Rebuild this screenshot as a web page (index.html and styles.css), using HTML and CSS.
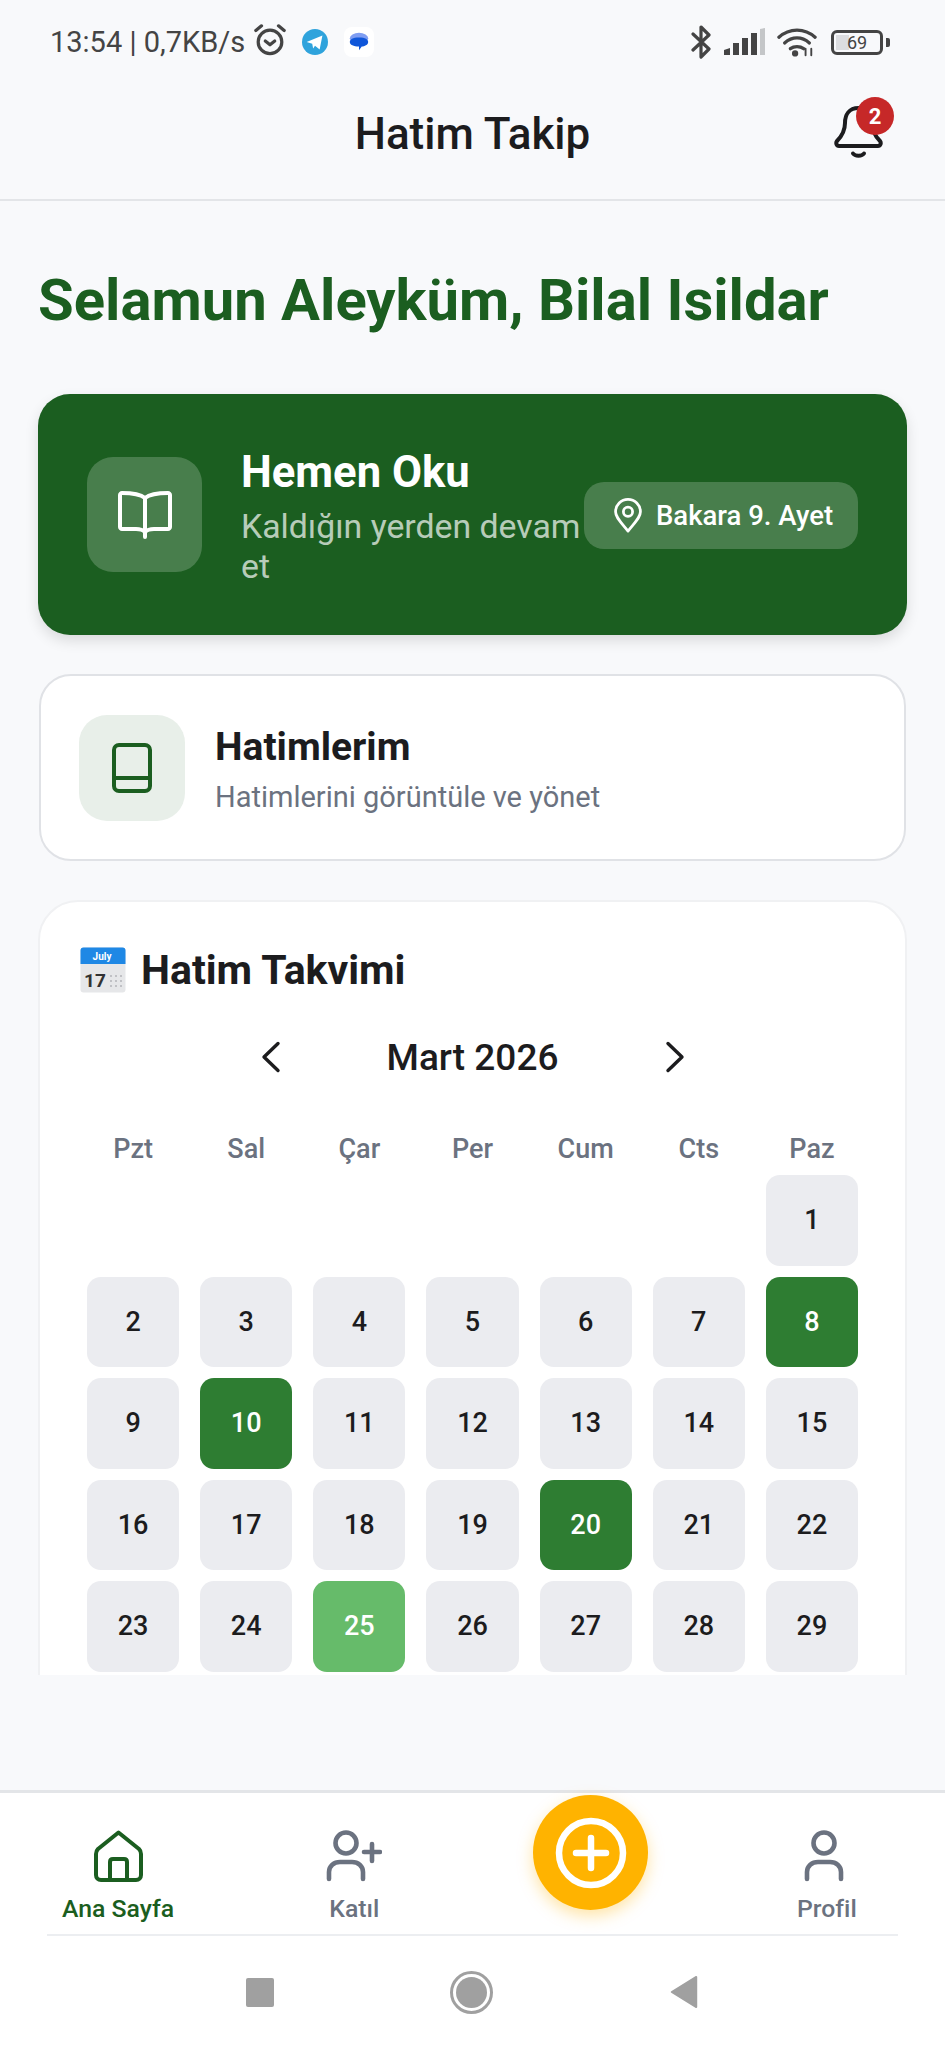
FILE: index.html
```html
<!DOCTYPE html>
<html lang="tr">
<head>
<meta charset="utf-8">
<title>Hatim Takip</title>
<link rel="stylesheet" href="styles.css">
</head>
<body>
<div class="app">
  <div class="statusbar">
    <div class="status-left">
      <span class="status-text">13:54 | 0,7KB/s</span>
      <svg class="ic-alarm" viewBox="0 0 36 36" fill="none" stroke="#444" stroke-width="3.4" stroke-linecap="round" stroke-linejoin="round"><circle cx="18" cy="20" r="12.5"/><path d="M13 19l5 4 5-4"/><path d="M3 8l6-5M33 8l-6-5"/></svg>
      <svg class="ic-tg" viewBox="0 0 28 28"><circle cx="14" cy="14" r="14" fill="#2fa3dc"/><path d="M5 14l17-7-3 15-5-4-2 3-1-5z" fill="#fff"/></svg>
      <span class="msg-box"><svg class="ic-msg" viewBox="0 0 24 24"><ellipse cx="12" cy="8" rx="10" ry="6" fill="#7f9df2"/><path d="M2 12c0-3 3-5 10-5s10 2 10 5-4 5-7 5l-3 4v-4c-6 0-10-2-10-5z" fill="#0f56d9"/></svg></span>
    </div>
    <div class="status-right">
      <svg class="ic-bt" viewBox="0 0 22 34" fill="none" stroke="#444" stroke-width="3.2" stroke-linecap="round" stroke-linejoin="round"><path d="M3 9l16 15-8 8V2l8 8L3 25"/></svg>
      <svg class="ic-sig" viewBox="0 0 42 28"><path d="M0 22l6-2v7H0z" fill="#444"/><rect x="9" y="15" width="6" height="12" fill="#444"/><rect x="18" y="10" width="6" height="17" fill="#444"/><rect x="27" y="5" width="6" height="22" fill="#444"/><path d="M36 1l5-1v27h-5z" fill="#c4c6c8"/></svg>
      <svg class="ic-wifi" viewBox="0 0 42 30" fill="none" stroke="#444" stroke-width="3.4" stroke-linecap="round"><path d="M2 10c11-10 27-10 38 0"/><path d="M8 16c8-7 18-7 26 0"/><path d="M14 22c4-3 10-3 14 0"/><circle cx="19" cy="27" r="1.6" fill="#444"/><path d="M30 22v7M36 22v7" stroke-width="2"/></svg>
      <div class="battery"><span class="batt-fill"></span><span class="batt-text">69</span></div>
    </div>
  </div>

  <header class="header">
    <h1 class="app-title">Hatim Takip</h1>
    <div class="bell">
      <svg viewBox="0 0 49 53" fill="none" stroke="#1c1c1e" stroke-width="4" stroke-linecap="round" stroke-linejoin="round"><path d="M24.500 3C15 3 11 10 11 18c0 8-3 13-8 18-1.500 2-.500 5 2 5h39c2.500 0 3.500-3 2-5-5-5-8-10-8-18 0-8-4-15-13.500-15z"/><path d="M19 48.500c2 3 9 3 11 0"/></svg>
      <span class="badge">2</span>
    </div>
  </header>

  <main class="main">
    <h2 class="greeting">Selamun Aleyküm, Bilal Isildar</h2>

    <section class="read-card">
      <div class="read-icon">
        <svg viewBox="0 0 54 48" fill="none" stroke="#fff" stroke-width="4" stroke-linejoin="round" stroke-linecap="round"><path d="M27 7C22 3 12 2 4 2c-1 0-2 1-2 2v32c0 1 1 2 2 2h14c4 0 7 1 9 3 2-2 5-3 9-3h14c1 0 2-1 2-2V4c0-1-1-2-2-2-8 0-18 1-23 5z"/><path d="M27 7v39"/></svg>
      </div>
      <div class="read-body">
        <div class="read-title">Hemen Oku</div>
        <div class="read-sub">Kaldığın yerden devam et</div>
      </div>
      <div class="read-pill">
        <svg viewBox="0 0 32 38" fill="none" stroke="#fff" stroke-width="3"><path d="M16 36C8 26 2.500 21 2.500 15a13.500 13.500 0 0 1 27 0c0 6-5.500 11-13.500 21z" stroke-linejoin="round"/><circle cx="16" cy="15" r="5"/></svg>
        <span>Bakara 9. Ayet</span>
      </div>
    </section>

    <section class="hatim-card">
      <div class="hatim-icon">
        <svg viewBox="0 0 40 50" fill="none" stroke="#1b5e20" stroke-width="4" stroke-linejoin="round"><rect x="2" y="2" width="36" height="46" rx="5"/><path d="M2 35h36"/></svg>
      </div>
      <div>
        <div class="hatim-title">Hatimlerim</div>
        <div class="hatim-sub">Hatimlerini görüntüle ve yönet</div>
      </div>
    </section>

    <section class="cal-card">
      <div class="cal-head">
        <svg class="ic-cal" viewBox="0 0 46 46"><rect x="0.500" y="0.500" width="45" height="45" rx="3" fill="#e6e7e9"/><path d="M0.500 17V3.500a3 3 0 0 1 3-3h39a3 3 0 0 1 3 3V17z" fill="#1f88e5"/><text x="22" y="12.500" font-size="10" font-weight="700" fill="#fff" text-anchor="middle" font-family="Roboto">July</text><text x="15" y="40" font-size="19" font-weight="700" fill="#333" text-anchor="middle" font-family="Roboto">17</text><g fill="#b3b5b8"><circle cx="31" cy="29" r="1"/><circle cx="36" cy="29" r="1"/><circle cx="41" cy="29" r="1"/><circle cx="31" cy="34" r="1"/><circle cx="36" cy="34" r="1"/><circle cx="41" cy="34" r="1"/><circle cx="31" cy="39" r="1"/><circle cx="36" cy="39" r="1"/><circle cx="41" cy="39" r="1"/></g></svg>
        <h3 class="cal-title">Hatim Takvimi</h3>
      </div>
      <div class="month-row">
        <svg class="chev" viewBox="0 0 20 32" fill="none" stroke="#1c1c1e" stroke-width="3.400" stroke-linecap="round" stroke-linejoin="round"><path d="M17 2.500L3 16l14 13.500"/></svg>
        <span class="month">Mart 2026</span>
        <svg class="chev" viewBox="0 0 20 32" fill="none" stroke="#1c1c1e" stroke-width="3.400" stroke-linecap="round" stroke-linejoin="round"><path d="M3 2.500L17 16 3 29.500"/></svg>
      </div>
      <div class="weekdays">
        <span>Pzt</span><span>Sal</span><span>Çar</span><span>Per</span><span>Cum</span><span>Cts</span><span>Paz</span>
      </div>
      <div class="days">
        <span class="blank"></span><span class="blank"></span><span class="blank"></span><span class="blank"></span><span class="blank"></span><span class="blank"></span>
        <span class="day">1</span>
        <span class="day">2</span><span class="day">3</span><span class="day">4</span><span class="day">5</span><span class="day">6</span><span class="day">7</span><span class="day done">8</span>
        <span class="day">9</span><span class="day done">10</span><span class="day">11</span><span class="day">12</span><span class="day">13</span><span class="day">14</span><span class="day">15</span>
        <span class="day">16</span><span class="day">17</span><span class="day">18</span><span class="day">19</span><span class="day done">20</span><span class="day">21</span><span class="day">22</span>
        <span class="day">23</span><span class="day">24</span><span class="day today">25</span><span class="day">26</span><span class="day">27</span><span class="day">28</span><span class="day">29</span>
      </div>
    </section>
  </main>

  <nav class="tabbar">
    <div class="tabs">
      <div class="tab active">
        <svg class="ic-home" viewBox="0 0 49 52" fill="none" stroke="#1b5e20" stroke-width="4" stroke-linejoin="round"><path d="M24.500 2.500L4 19c-1.500 1.500-2 3-2 5v21c0 3 2 5 5 5h35c3 0 5-2 5-5V24c0-2-.5-3.500-2-5z"/><path d="M16 50V32c0-2 1-3 3-3h11c2 0 3 1 3 3v18"/></svg>
        <span>Ana Sayfa</span>
      </div>
      <div class="tab">
        <svg class="ic-join" viewBox="0 0 56 52" fill="none" stroke="#6b7280" stroke-width="4.600" stroke-linecap="round"><circle cx="20" cy="13" r="10.500"/><path d="M3 49v-7c0-6 5-10 11-10h12c6 0 11 4 11 10v7"/><path d="M38 22h16M46 14v17"/></svg>
        <span>Katıl</span>
      </div>
      <div class="tab fab-slot">
        <div class="fab">
          <svg viewBox="0 0 72 72" fill="none" stroke="#fff" stroke-width="6.500" stroke-linecap="round"><circle cx="36" cy="36" r="32"/><path d="M36 21v30M21 36h30"/></svg>
        </div>
      </div>
      <div class="tab">
        <svg class="ic-prof" viewBox="0 0 46 52" fill="none" stroke="#6b7280" stroke-width="4.600" stroke-linecap="round"><circle cx="20" cy="13" r="10.500"/><path d="M3 49v-7c0-6 5-10 11-10h12c6 0 11 4 11 10v7"/></svg>
        <span>Profil</span>
      </div>
    </div>
    <div class="tab-rule"></div>
    <div class="gesture">
      <span class="nav-square"></span>
      <span class="nav-circle"><span class="nav-dot"></span></span>
      <svg class="nav-back" viewBox="0 0 30 36"><path d="M28 2v32L2 18z" fill="#a0a0a0" stroke="#a0a0a0" stroke-width="2" stroke-linejoin="round"/></svg>
    </div>
  </nav>
</div>
</body>
</html>
```
FILE: styles.css
```css
* { box-sizing: border-box; }
html, body { margin: 0; padding: 0; }
body { font-family: Roboto, "Liberation Sans", sans-serif; color: #1c1c1e; background: #f8f9fb; }
h1, h2, h3 { margin: 0; }

.app { width: 945px; height: 2048px; display: flex; flex-direction: column; background: #f8f9fb; overflow: hidden; }

/* status bar */
.statusbar { height: 72px; flex: none; display: flex; justify-content: space-between; align-items: center; padding: 12px 62px 0 50px; }
.status-left, .status-right { display: flex; align-items: center; }
.status-text { font-size: 29px; color: #444; }
.ic-alarm { width: 34px; height: 34px; margin-left: 8px; margin-top: -4px; }
.ic-tg { width: 26px; height: 26px; margin-left: 15px; }
.msg-box { width: 30px; height: 30px; margin-left: 16px; background: #fff; border-radius: 8px; display: flex; align-items: center; justify-content: center; }
.ic-msg { width: 22px; height: 22px; }
.ic-bt { width: 22px; height: 34px; }
.ic-sig { width: 42px; height: 28px; margin-left: 12px; }
.ic-wifi { width: 40px; height: 30px; margin-left: 11px; }
.battery { position: relative; width: 52px; height: 25px; margin-left: 14px; border: 3px solid #444; border-radius: 6px; display: flex; align-items: center; justify-content: center; }
.battery::after { content: ""; position: absolute; right: -10px; top: 5px; width: 4px; height: 9px; background: #444; border-radius: 0 2px 2px 0; }
.batt-fill { position: absolute; left: 2px; top: 2px; bottom: 2px; width: 13px; background: #dcdde0; }
.batt-text { position: relative; font-size: 18px; color: #444; }

/* header */
.header { height: 129px; flex: none; position: relative; display: flex; align-items: center; justify-content: center; border-bottom: 2px solid #e3e5e8; padding-bottom: 3px; }
.app-title { font-size: 44px; font-weight: 500; color: #1c1c1e; }
.bell { position: absolute; right: 51px; top: 25px; width: 60px; height: 62px; }
.bell svg { position: absolute; left: 0; top: 8px; width: 49px; height: 53px; }
.badge { position: absolute; right: 0; top: 0; width: 38px; height: 38px; border-radius: 50%; background: #c62828; color: #fff; font-size: 22px; font-weight: 700; display: flex; align-items: center; justify-content: center; }

/* main */
.main { height: 1474px; flex: none; overflow: hidden; padding: 0 38px; margin-bottom: 115px; }
.greeting { font-size: 58px; font-weight: 700; color: #1b5e20; margin-top: 65px; line-height: 68px; }

.read-card { margin-top: 60px; height: 241px; background: #1b5e20; border-radius: 32px; box-shadow: 0 6px 14px rgba(0,0,0,.12); display: flex; align-items: flex-start; padding: 63px 49px 0 49px; }
.read-icon { width: 115px; height: 115px; flex: none; border-radius: 26px; background: rgba(255,255,255,.2); display: flex; align-items: center; justify-content: center; }
.read-icon svg { width: 54px; height: 48px; }
.read-body { width: 343px; flex: none; margin-left: 39px; margin-top: -9px; }
.read-title { font-size: 43.600px; font-weight: 700; color: #fff; line-height: 50px; }
.read-sub { font-size: 33.800px; color: rgba(255,255,255,.7); line-height: 40px; margin-top: 9px; }
.read-pill { margin-top: 25px; height: 67px; width: 274px; flex: none; border-radius: 20px; background: rgba(255,255,255,.2); display: flex; align-items: center; padding-left: 29px; gap: 13px; font-size: 27.500px; font-weight: 500; color: #fff; white-space: nowrap; }
.read-pill svg { width: 30px; height: 35px; flex: none; }

.hatim-card { margin-top: 39px; height: 187px; background: #fff; border: 2px solid #e0e2e6; border-radius: 32px; display: flex; align-items: center; padding: 0 38px; gap: 30px; margin-left: 1px; margin-right: 1px; }
.hatim-icon { width: 106px; height: 106px; flex: none; border-radius: 28px; background: #e8efe9; display: flex; align-items: center; justify-content: center; }
.hatim-icon svg { width: 40px; height: 50px; }
.hatim-title { font-size: 39px; font-weight: 700; line-height: 46px; margin-top: 3px; }
.hatim-sub { font-size: 29px; color: #6b7280; line-height: 36px; margin-top: 9px; }

.cal-card { margin-top: 39px; background: #fff; border: 2px solid #f0f1f3; border-radius: 40px; padding: 44px 40px 40px; }
.cal-head { display: flex; align-items: center; gap: 15px; }
.ic-cal { width: 46px; height: 46px; flex: none; }
.cal-title { font-size: 41px; font-weight: 700; line-height: 48px; }
.month-row { margin-top: 41px; display: flex; align-items: center; justify-content: center; height: 44px; }
.month { font-size: 37px; font-weight: 500; width: 384px; text-align: center; }
.chev { width: 20px; height: 32px; flex: none; }
.weekdays { margin: 52px 7px 0; display: grid; grid-template-columns: repeat(7, 1fr); column-gap: 21px; text-align: center; font-size: 27px; font-weight: 500; color: #6b7280; line-height: 36px; }
.days { margin: 8px 7px 0; display: grid; grid-template-columns: repeat(7, 1fr); column-gap: 21px; row-gap: 11px; }
.blank { height: 90.500px; }
.day { height: 90.500px; background: #ebecf0; border-radius: 14px; display: flex; align-items: center; justify-content: center; font-size: 27px; font-weight: 500; color: #1c1c1e; }
.done { background: #2e7d32; color: #fff; }
.today { background: #66bb6a; color: #fff; }

/* bottom nav */
.tabbar { flex: 1; background: #fff; border-top: 3px solid #e3e5e8; display: flex; flex-direction: column; }
.tabs { height: 141px; flex: none; display: grid; grid-template-columns: repeat(4, 1fr); }
.tab { display: flex; flex-direction: column; align-items: center; padding-top: 37px; font-size: 24.800px; font-weight: 500; color: #6b7280; line-height: 32px; }
.tab svg { height: 52px; margin-bottom: 11px; }
.ic-home { width: 49px; }
.ic-join { width: 56px; }
.ic-prof { width: 46px; }
.tab.active { color: #1b5e20; }
.fab-slot { padding-top: 2px; }
.fab { width: 115px; height: 115px; border-radius: 50%; background: #ffb300; box-shadow: 0 6px 16px rgba(255,179,0,.35); display: flex; align-items: center; justify-content: center; }
.fab svg { width: 72px; height: 72px; margin: 0; }
.tab-rule { height: 2px; margin: 0 47px; background: #eceef1; flex: none; }
.gesture { flex: 1; display: flex; align-items: center; justify-content: center; gap: 176px; }
.nav-square { width: 28px; height: 29px; background: #a0a0a0; border-radius: 2px; }
.nav-circle { width: 43px; height: 43px; border-radius: 50%; border: 3px solid #a0a0a0; display: flex; align-items: center; justify-content: center; }
.nav-dot { width: 31px; height: 31px; border-radius: 50%; background: #a0a0a0; }
.nav-back { width: 30px; height: 34px; }
```
